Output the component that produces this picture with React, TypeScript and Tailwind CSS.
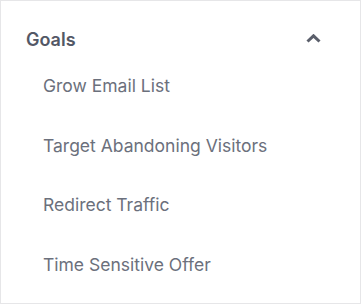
import React, { useState } from "react";

const goals = [
  "Grow Email List",
  "Target Abandoning Visitors",
  "Redirect Traffic",
  "Time Sensitive Offer",
];

export default function App() {
  const [open, setOpen] = useState(true);

  return (
    <div
      className="w-[361px] h-[304px] bg-white border border-[#e6e6e8] pt-[27px]"
      style={{ fontFamily: "Inter, 'Open Sans', sans-serif" }}
    >
      {/* Section header */}
      <button
        onClick={() => setOpen(!open)}
        className="w-full flex items-start justify-between pl-[25px] pr-[39px] h-[24px]"
      >
        <span className="text-[18px] leading-[24px] font-semibold text-[#535866]">Goals</span>
        <svg
          width="15"
          height="9"
          viewBox="0 0 15 9"
          className={open ? "mt-[6px]" : "mt-[6px] rotate-180"}
        >
          <path d="M1.5 7.5 L7.5 1.8 L13.5 7.5" fill="none" stroke="#5b5f6b" strokeWidth="3" />
        </svg>
      </button>

      {open && (
        <ul className="flex flex-col mt-[22px]">
          {goals.map((g) => (
            <li key={g} className="pl-[42px] h-[59.5px] text-[17.5px] text-[#6b707c] leading-[24px]">
              {g}
            </li>
          ))}
        </ul>
      )}
    </div>
  );
}
